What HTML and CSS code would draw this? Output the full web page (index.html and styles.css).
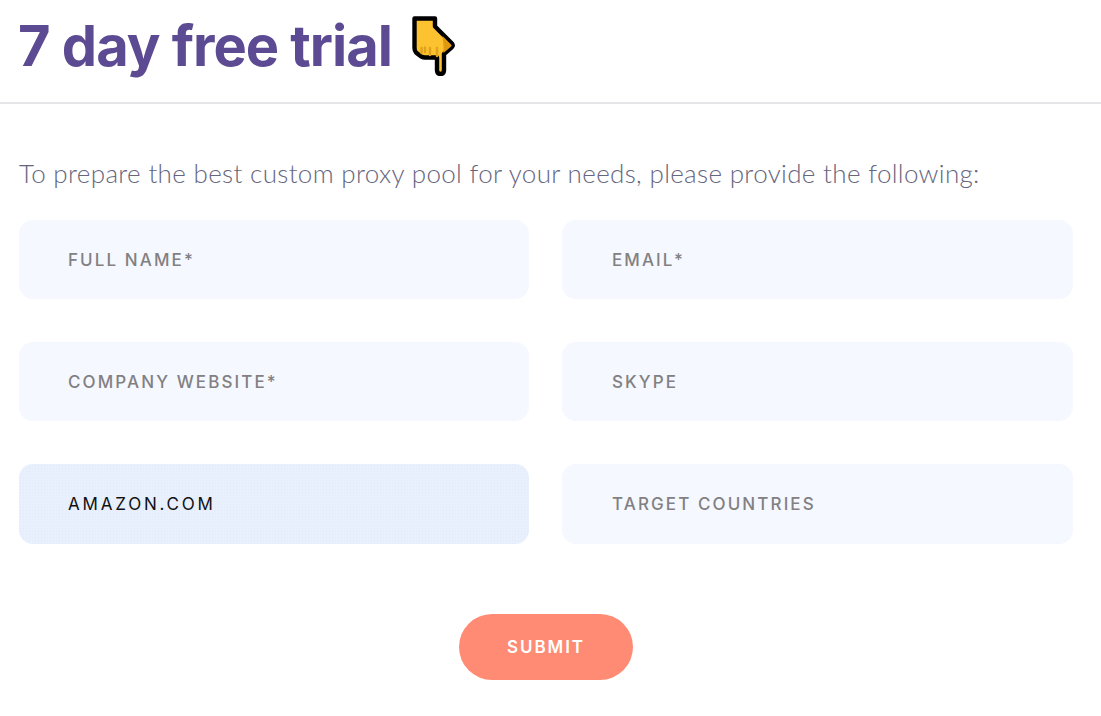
FILE: index.html
```html
<!DOCTYPE html>
<html lang="en">
<head>
<meta charset="utf-8">
<title>7 day free trial</title>
<link rel="stylesheet" href="styles.css">
</head>
<body>
<header class="header">
  <h1 class="title">7 day free trial</h1>
  <svg class="hand" viewBox="0 0 44 60" aria-hidden="true">
    <path d="M2.5 2.5H23V10.5L40 27.5C41 29 41 30 40 31L32 38V54C32 56.5 31 58 28.5 58C26 58 25 56.5 25 54V41.5H13C10 41.5 8 40 6.5 38.5L4 36.5C2.5 35 2.5 34 2.5 32Z" fill="#fdc22f" stroke="#000" stroke-width="4.4" stroke-linejoin="round"/>
    <path d="M30.5 20L38.8 28.3C39.8 29.3 39.8 30 38.8 30.8L31.5 37V29Z" fill="#e0990f"/>
    <path d="M9.5 32V37M13 31.5V36M18 32V39M25 32V40" stroke="#e0a21c" stroke-width="2.4" stroke-linecap="round" fill="none"/>
  </svg>
</header>
<main class="content">
  <p class="intro">To prepare the best custom proxy pool for your needs, please provide the following:</p>
  <form class="form">
    <div class="grid">
      <input class="field" type="text" placeholder="FULL NAME*">
      <input class="field" type="text" placeholder="EMAIL*">
      <input class="field" type="text" placeholder="COMPANY WEBSITE*">
      <input class="field" type="text" placeholder="SKYPE">
      <input class="field field-filled" type="text" value="AMAZON.COM">
      <input class="field" type="text" placeholder="TARGET COUNTRIES">
    </div>
    <div class="actions">
      <button class="submit" type="button">SUBMIT</button>
    </div>
  </form>
</main>
</body>
</html>
```
FILE: styles.css
```css
* { box-sizing: border-box; }
html, body { margin: 0; padding: 0; background: #fff; }
body { width: 1101px; height: 716px; overflow: hidden; font-family: "Inter", "Liberation Sans", sans-serif; }
.header {
  height: 104px;
  border-bottom: 2px solid #e6e6e9;
  padding: 16px 0 0 18px;
  display: flex;
  align-items: flex-start;
}
.title {
  margin: 0;
  font-family: "Inter", sans-serif;
  font-size: 56px;
  line-height: 60px;
  font-weight: 650;
  letter-spacing: -1px;
  color: #5c4b93;
}
.hand { width: 44px; height: 60px; margin: 0 0 0 20px; display: block; }
.content { padding: 55px 28px 0 19px; }
.intro {
  margin: 0;
  font-family: "Lato", sans-serif;
  font-weight: 300;
  font-size: 26px;
  letter-spacing: 0.33px;
  line-height: 28px;
  color: #66657e;
}
.form { margin-top: 33px; }
.grid {
  display: grid;
  grid-template-columns: 510px 511px;
  grid-template-rows: 79px 79px 80px;
  column-gap: 33px;
  row-gap: 43px;
}
.field {
  width: 100%;
  height: 100%;
  border: 0;
  outline: 0;
  border-radius: 14px;
  background: #f5f8ff;
  padding: 0 49px;
  font-family: "Inter", sans-serif;
  font-size: 17px;
  font-weight: 500;
  letter-spacing: 2.1px;
  color: #111;
}
.field:nth-child(even) { padding-left: 50px; }
.field::placeholder { color: #828082; opacity: 1; }
.field-filled {
  background-color: #e8f0fe;
  background-image: radial-gradient(#e2eafa 0.6px, transparent 0.7px);
  background-size: 3px 3px;
  font-weight: 400;
  letter-spacing: 2.8px;
}
.actions { display: flex; justify-content: center; margin-top: 70px; }
.submit {
  width: 174px;
  height: 66px;
  border: 0;
  border-radius: 33px;
  background: #ff8b74;
  color: #fff;
  font-family: "Inter", sans-serif;
  font-size: 17px;
  font-weight: 600;
  letter-spacing: 1.9px;
}
```
